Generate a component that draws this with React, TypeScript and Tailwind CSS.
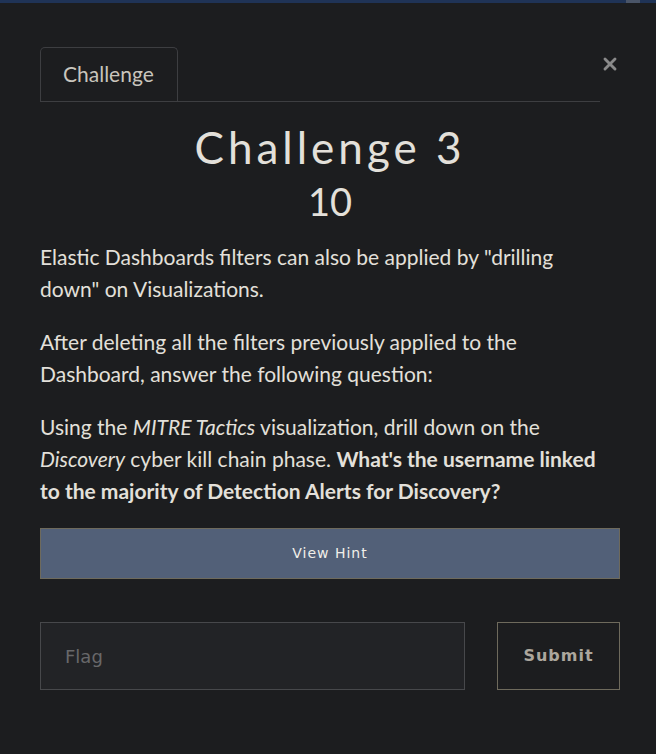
import { X } from "lucide-react";

const body = { fontFamily: "Lato, 'Open Sans', sans-serif" };
const ui = { fontFamily: "'DejaVu Sans', 'Noto Sans', sans-serif" };

export default function App() {
  return (
    <div className="min-h-[754px] bg-[#1c1d1f]" style={body}>
      <div className="flex h-[3px] bg-[#1f3356]">
        <div className="flex-1" />
        <div className="w-[14px] bg-[#4a5568]" />
        <div className="w-[16px]" />
      </div>

      <div className="pl-[40px] pr-[36px]">
        <div className="mt-[44px] flex items-start">
          <div className="flex flex-1 border-b border-[#3d3e41]">
            <div className="-mb-px flex h-[55px] items-center rounded-t-[5px] border border-b-0 border-[#3d3e41] pb-[2px] pl-[22px] pr-[23px] text-[21px] text-[#c9c5bd]">
              Challenge
            </div>
          </div>
          <button className="mt-[7px] flex w-[20px] justify-center text-[#8a8a8a]">
            <X size={20} strokeWidth={3.5} />
          </button>
        </div>

        <h2 className="mt-[18px] text-center text-[44px] leading-[54px] tracking-[4px] text-[#e3e0da]">
          Challenge 3
        </h2>
        <h4 className="mt-[4px] text-center text-[38px] leading-[46px] text-[#e3e0da]">10</h4>

        <div className="mt-[17px] pr-[15px] text-[21px] leading-[32px] text-[#e3e0da]">
          <p className="mb-[21px]">
            Elastic Dashboards filters can also be applied by "drilling down" on Visualizations.
          </p>
          <p className="mb-[21px]">
            After deleting all the filters previously applied to the Dashboard, answer the following
            question:
          </p>
          <p>
            Using the <em>MITRE Tactics</em> visualization, drill down on the <em>Discovery</em> cyber
            kill chain phase.{" "}
            <strong>
              What's the username linked to the majority of Detection Alerts for Discovery?
            </strong>
          </p>
        </div>

        <button
          className="mt-[21px] h-[51px] w-full border border-[#6e6a5c] bg-[#526078] text-[14px] tracking-[1px] text-[#f1efe9]"
          style={ui}
        >
          View Hint
        </button>

        <div className="mt-[43px] flex gap-[32px]">
          <input
            placeholder="Flag"
            className="h-[68px] flex-1 border border-[#47484b] bg-[#222326] px-[24px] text-[18px] text-[#d0ccc4] outline-none placeholder:text-[#68686a]"
            style={ui}
          />
          <button
            className="h-[68px] w-[123px] border border-[#6e6a5c] text-[16px] font-bold tracking-[1px] text-[#aca79d]"
            style={ui}
          >
            Submit
          </button>
        </div>
      </div>
    </div>
  );
}
